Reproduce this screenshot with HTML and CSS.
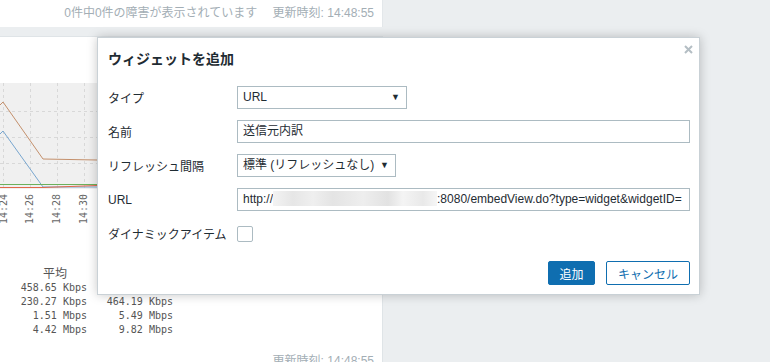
FILE: index.html
```html
<!DOCTYPE html>
<html lang="ja">
<head>
  <meta charset="utf-8">
  <title>ダッシュボード</title>
  <link rel="stylesheet" href="styles.css">
</head>
<body>
<div class="column">
  <div class="panel top-panel">
    <span class="problem-count">0件中0件の障害が表示されています</span>
    <span class="updated">更新時刻: 14:48:55</span>
  </div>
  <div class="panel graph-panel">
    <svg class="graph" width="383" height="200" viewBox="0 0 383 200">
      <rect x="0" y="47" width="383" height="106" fill="#f0f0f0"/>
      <g stroke="#d8d8d8" stroke-width="1" stroke-dasharray="3,3">
        <line x1="0" y1="75.5" x2="383" y2="75.5"/>
        <line x1="0" y1="101.5" x2="383" y2="101.5"/>
        <line x1="0" y1="127.5" x2="383" y2="127.5"/>
        <line x1="3.5" y1="47" x2="3.5" y2="153"/>
        <line x1="30.5" y1="47" x2="30.5" y2="153"/>
        <line x1="57.5" y1="47" x2="57.5" y2="153"/>
        <line x1="84.5" y1="47" x2="84.5" y2="153"/>
      </g>
      <polyline points="0,69 3,66 43,123 97,124" fill="none" stroke="#c4906c" stroke-width="1"/>
      <polyline points="0,98 3,95 43,151 97,151" fill="none" stroke="#78a6cf" stroke-width="1"/>
      <line x1="0" y1="148.5" x2="97" y2="148.5" stroke="#6cb05c" stroke-width="1"/>
      <polyline points="0,151.5 43,151.5 97,149.5" fill="none" stroke="#e2684a" stroke-width="1"/>
      <g class="ticks">
        <text transform="translate(7,158) rotate(-90)" text-anchor="end">14:24</text>
        <text transform="translate(33,158) rotate(-90)" text-anchor="end">14:26</text>
        <text transform="translate(60,158) rotate(-90)" text-anchor="end">14:28</text>
        <text transform="translate(87,158) rotate(-90)" text-anchor="end">14:30</text>
      </g>
    </svg>
    <div class="stats">
      <div class="stats-row stats-head"><span class="cell">平均</span><span class="cell"></span></div>
      <div class="stats-row"><span class="cell">458.65 Kbps</span><span class="cell">890.12 Kbps</span></div>
      <div class="stats-row"><span class="cell">230.27 Kbps</span><span class="cell">464.19 Kbps</span></div>
      <div class="stats-row"><span class="cell">1.51 Mbps</span><span class="cell">5.49 Mbps</span></div>
      <div class="stats-row"><span class="cell">4.42 Mbps</span><span class="cell">9.82 Mbps</span></div>
    </div>
    <div class="panel-foot">更新時刻: 14:48:55</div>
  </div>
</div>

<div class="dialog">
  <div class="dialog-head">
    <h2>ウィジェットを追加</h2>
    <svg class="close" width="9" height="9" viewBox="0 0 9 9">
      <path d="M1 1 L8 8 M8 1 L1 8" stroke="#b4bec4" stroke-width="2"/>
    </svg>
  </div>
  <div class="form">
    <div class="form-row">
      <label>タイプ</label>
      <div class="select select-type">URL<span class="arrow">▼</span></div>
    </div>
    <div class="form-row">
      <label>名前</label>
      <div class="input">送信元内訳</div>
    </div>
    <div class="form-row">
      <label>リフレッシュ間隔</label>
      <div class="select select-refresh">標準 (リフレッシュなし)<span class="arrow">▼</span></div>
    </div>
    <div class="form-row">
      <label>URL</label>
      <div class="input url">http://<span class="redacted"></span>:8080/embedView.do?type=widget&amp;widgetID=</div>
    </div>
    <div class="form-row">
      <label>ダイナミックアイテム</label>
      <span class="checkbox"></span>
    </div>
  </div>
  <div class="dialog-foot">
    <button class="btn btn-primary">追加</button>
    <button class="btn btn-alt">キャンセル</button>
  </div>
</div>
</body>
</html>
```

FILE: styles.css
```css
body {
  margin: 0;
  background-color: #ebeef0;
  font-family: 'Liberation Sans', 'Noto Sans CJK JP', sans-serif;
  font-size: 12px;
  color: #1f2c33;
  height: 362px;
  overflow: hidden;
}

.column {
  display: flex;
  flex-direction: column;
  gap: 9px;
  width: 383px;
  height: 362px;
}

.panel {
  background-color: #fff;
  box-sizing: border-box;
}

.top-panel {
  height: 27px;
  line-height: 27px;
  text-align: right;
  padding-right: 8px;
  color: #a3aeb5;
  border-right: 1px solid #e3e7ea;
}

.updated {
  margin-left: 12px;
}

.graph-panel {
  flex: 1;
  border-right: 1px solid #dfe4e7;
  border-top: 1px solid #dfe4e7;
  position: relative;
}

.graph {
  display: block;
  margin-top: -1px;
}

.ticks text {
  font-family: 'DejaVu Sans Mono', monospace;
  font-size: 10px;
  fill: #666;
}

.stats {
  margin-top: 31px;
  font-family: 'DejaVu Sans Mono', 'Noto Sans CJK JP', monospace;
  font-size: 10px;
  color: #555;
}

.stats-row {
  display: flex;
  padding-left: 1px;
  height: 14px;
  line-height: 14px;
}

.stats-row .cell {
  width: 86px;
  text-align: right;
}

.stats-head .cell {
  font-family: 'Liberation Sans', 'Noto Sans CJK JP', sans-serif;
  font-size: 12px;
  text-align: center;
  width: 66px;
  margin-left: 21px;
}

.panel-foot {
  margin-top: 17px;
  text-align: right;
  padding-right: 8px;
  line-height: 14px;
  color: #a3aeb5;
}

/* dialog */
.dialog {
  position: absolute;
  left: 97px;
  top: 37px;
  width: 603px;
  height: 258px;
  box-sizing: border-box;
  background-color: #fff;
  border: 1px solid #c9d1d6;
  box-shadow: 0 0 10px rgba(0, 0, 0, 0.22);
}

.dialog-head {
  position: relative;
  height: 42px;
  padding: 0 10px;
}

.dialog-head h2 {
  margin: 0;
  font-size: 14px;
  font-weight: bold;
  line-height: 42px;
  color: #1f2c33;
}

.close {
  position: absolute;
  right: 6px;
  top: 7px;
}

.form {
  margin-top: 6px;
  padding: 0 9px 0 10px;
  display: flex;
  flex-direction: column;
  gap: 11px;
}

.form-row {
  display: flex;
  align-items: center;
  height: 23px;
}

.form-row label {
  width: 129px;
  flex-shrink: 0;
}

.input,
.select {
  box-sizing: border-box;
  height: 23px;
  line-height: 21px;
  border: 1px solid #acbbc2;
  padding: 0 5px;
  white-space: nowrap;
  overflow: hidden;
}

.input {
  flex: 1;
}

.select {
  display: flex;
  justify-content: space-between;
}

.select-type {
  width: 170px;
}

.select-refresh {
  width: 159px;
}

.arrow {
  font-size: 9px;
  padding-right: 1px;
}

.redacted {
  display: inline-block;
  width: 164px;
  height: 15px;
  vertical-align: -3px;
  background: linear-gradient(to right, #f3f3f3 0, #e6e6e6 20px, #efefef 40px, #e4e4e4 60px, #eeeeee 90px, #e2e2e2 115px, #f4f4f4 130px, #e9e9e9 150px, #f6f6f6 164px);
}

.checkbox {
  width: 16px;
  height: 16px;
  box-sizing: border-box;
  border: 1px solid #acbbc2;
  border-radius: 2px;
}

.dialog-foot {
  display: flex;
  justify-content: flex-end;
  gap: 11px;
  margin-top: 16px;
  padding-right: 9px;
}

.btn {
  height: 24px;
  box-sizing: border-box;
  font-family: 'Liberation Sans', 'Noto Sans CJK JP', sans-serif;
  font-size: 12px;
  border-radius: 2px;
  padding: 0 10px;
}

.btn-primary {
  width: 47px;
  background-color: #0f6eb0;
  border: 1px solid #0f6eb0;
  color: #fff;
}

.btn-alt {
  width: 84px;
  background-color: #fff;
  border: 1px solid #0f6eb0;
  color: #0f6eb0;
}
```
